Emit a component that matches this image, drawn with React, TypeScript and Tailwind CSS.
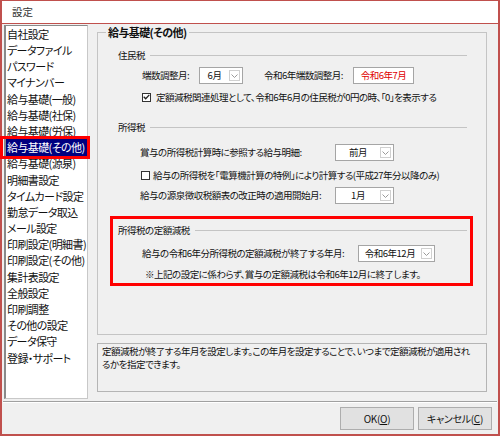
import React from 'react';

const navItems = [
  '自社設定',
  'データファイル',
  'パスワード',
  'マイナンバー',
  '給与基礎(一般)',
  '給与基礎(社保)',
  '給与基礎(労保)',
  '給与基礎(その他)',
  '給与基礎(源泉)',
  '明細書設定',
  'タイムカード設定',
  '勤怠データ取込',
  'メール設定',
  '印刷設定(明細書)',
  '印刷設定(その他)',
  '集計表設定',
  '全般設定',
  '印刷調整',
  'その他の設定',
  'データ保守',
  '登録・サポート',
];

const Combo = ({ value, width }: { value: string; width: string }) => (
  <div className={`flex h-[17px] shrink-0 items-center border border-[#a5a5a5] bg-white ${width}`}>
    <span className="flex-1 text-center leading-none">{value}</span>
    <span className="mr-[2px] flex h-[11px] w-[11px] items-end justify-center border border-[#d0d0d0] bg-white pb-[2px]">
      <svg width="7" height="4" viewBox="0 0 7 4">
        <path d="M0.5 0.5 L3.5 3.5 L6.5 0.5" fill="none" stroke="#9a9a9a" strokeWidth="1" />
      </svg>
    </span>
  </div>
);

const Check = ({ checked }: { checked?: boolean }) => (
  <span className="flex h-[9px] w-[9px] shrink-0 items-center justify-center border border-[#333] bg-white">
    {checked && (
      <svg width="7" height="6" viewBox="0 0 7 6">
        <path d="M0.7 2.8 L2.7 4.8 L6.3 0.9" fill="none" stroke="#222" strokeWidth="1.3" />
      </svg>
    )}
  </span>
);

const Header = ({ title }: { title: string }) => (
  <div className="flex h-[14px] items-center">
    <span className="whitespace-nowrap">{title}</span>
    <span className="ml-[5px] h-px flex-1 bg-[#c4c4c4]" />
  </div>
);

export default function App() {
  return (
    <div className="relative flex h-[436px] w-[500px] flex-col border-2 border-t border-[#c0504d] bg-[#f0f0f0] font-['Noto_Sans_CJK_JP','Noto_Sans',sans-serif] text-[#111] [font-feature-settings:'palt']">
      {/* title bar */}
      <div className="flex h-[23px] shrink-0 items-center border-b border-[#c0504d] bg-white pl-[10px] text-[10.5px] text-[#333]">
        設定
      </div>

      <div className="flex flex-1 flex-col">
        <div className="flex pt-[1px]">
          {/* left list */}
          <div className="ml-[2px] h-[374px] w-[84px] shrink-0 border border-l-2 border-[#8a8a8a] border-r-[#c8c8c8] border-b-[#c8c8c8] bg-white text-[11px] tracking-[-0.6px]">
            {navItems.map((item, i) => (
              <div
                key={item}
                className={`flex h-[16.2px] items-center whitespace-nowrap pl-[1px] ${i === 7 ? 'bg-[#000080] text-white' : ''}`}
              >
                {item}
              </div>
            ))}
          </div>

          {/* right column */}
          <div className="ml-[9px] flex w-[390px] flex-col text-[9.5px] tracking-[-0.5px]">
            <fieldset className="h-[310px] border border-[#c4c4c4]">
              <legend className="ml-[8px] px-[2px] text-[11px] font-bold leading-[14px] tracking-[-0.6px]">給与基礎(その他)</legend>
              <div className="pl-[12px] pr-[13px] pt-[9px]">
                {/* 住民税 */}
                <div className="pl-[8px] pr-[6px]">
                  <Header title="住民税" />
                  <div className="mt-[5px] flex items-center pl-[24px]">
                    <span className="w-[57px] whitespace-nowrap">端数調整月:</span>
                    <Combo value="6月" width="w-[44px]" />
                    <span className="ml-[21px] w-[89px] whitespace-nowrap">令和6年端数調整月:</span>
                    <div className="flex h-[17px] w-[61px] items-center justify-center border border-[#a5a5a5] bg-white text-[#e00000]">
                      令和6年7月
                    </div>
                  </div>
                  <div className="mt-[6px] flex h-[14px] items-center gap-[5px] pl-[24px]">
                    <Check checked />
                    <span className="whitespace-nowrap">定額減税関連処理として、令和6年6月の住民税が0円の時、「0」を表示する</span>
                  </div>
                </div>

                {/* 所得税 */}
                <div className="mt-[16px] pl-[8px] pr-[6px]">
                  <Header title="所得税" />
                  <div className="mt-[10px] flex items-center pl-[22px]">
                    <span className="w-[195px] whitespace-nowrap">賞与の所得税計算時に参照する給与明細:</span>
                    <Combo value="前月" width="w-[59px]" />
                  </div>
                  <div className="mt-[7px] flex h-[14px] items-center gap-[3px] pl-[23px]">
                    <Check />
                    <span className="whitespace-nowrap">給与の所得税を「電算機計算の特例」により計算する(平成27年分以降のみ)</span>
                  </div>
                  <div className="mt-[5px] flex items-center pl-[22px]">
                    <span className="w-[195px] whitespace-nowrap">給与の源泉徴収税額表の改正時の適用開始月:</span>
                    <Combo value="1月" width="w-[59px]" />
                  </div>
                </div>

                {/* 所得税の定額減税 (highlighted) */}
                <div className="mt-[12px] border-[3px] border-[#ff0000] pb-[2px] pl-[5px] pr-[3px] pt-[4px]">
                  <Header title="所得税の定額減税" />
                  <div className="mt-[8px] flex items-center pl-[24px]">
                    <span className="w-[216px] whitespace-nowrap">給与の令和6年分所得税の定額減税が終了する年月:</span>
                    <Combo value="令和6年12月" width="w-[77px]" />
                  </div>
                  <div className="mt-[5px] flex h-[14px] items-center whitespace-nowrap pl-[27px]">
                    ※上記の設定に係わらず、賞与の定額減税は令和6年12月に終了します。
                  </div>
                </div>
              </div>
            </fieldset>

            <div className="mt-[8px] h-[49px] border border-[#b4b4b4] px-[4px] pt-[1px] leading-[13px]">
              <div className="whitespace-nowrap">定額減税が終了する年月を設定します。この年月を設定することで、いつまで定額減税が適用され</div>
              <div className="whitespace-nowrap">るかを指定できます。</div>
            </div>
          </div>
        </div>

        {/* separator */}
        <div className="mx-[1px] mt-[2px] border-t border-b border-t-[#a0a0a0] border-b-white" />

        {/* buttons */}
        <div className="mt-[4px] flex justify-end gap-[4px] pr-[6px] text-[10px] tracking-[-0.3px]">
          <button className="flex h-[23px] w-[74px] items-center justify-center border border-[#adadad] bg-[#e1e1e1]">
            OK(<span className="underline">O</span>)
          </button>
          <button className="flex h-[23px] w-[74px] items-center justify-center border border-[#adadad] bg-[#e1e1e1]">
            キャンセル(<span className="underline">C</span>)
          </button>
        </div>
      </div>

      {/* red highlight around the selected list item */}
      <div className="pointer-events-none absolute left-[-2px] top-[135px] h-[23px] w-[90px] border-[3px] border-[#ff0000]" />
    </div>
  );
}
